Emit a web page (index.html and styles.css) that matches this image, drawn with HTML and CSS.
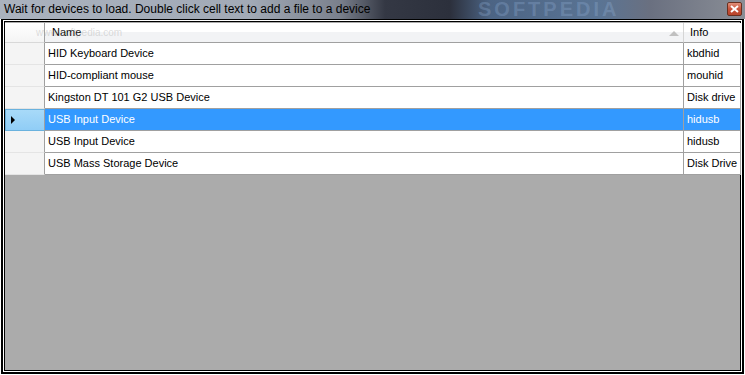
FILE: index.html
```html
<!DOCTYPE html>
<html>
<head>
<meta charset="utf-8">
<link rel="stylesheet" href="styles.css">
</head>
<body>
<div class="titlebar">
  <span class="title">Wait for devices to load. Double click cell text to add a file to a device</span>
  <span class="wm">SOFTPEDIA</span>
  <span class="close">
    <svg width="9" height="8" viewBox="0 0 9 8"><path d="M1 1 L8 7 M8 1 L1 7" stroke="#fff" stroke-width="2"/></svg>
  </span>
</div>
<div class="frame">
  <div class="inner">
    <div class="grid">
      <div class="row head">
        <div class="rh"></div>
        <div class="c name">Name<span class="sort"></span></div>
        <div class="c info">Info</div>
        <span class="wmh">www.softpedia.com</span>
      </div>
      <div class="row"><div class="rh"></div><div class="c name">HID Keyboard Device</div><div class="c info">kbdhid</div></div>
      <div class="row"><div class="rh"></div><div class="c name">HID-compliant mouse</div><div class="c info">mouhid</div></div>
      <div class="row"><div class="rh"></div><div class="c name">Kingston DT 101 G2 USB Device</div><div class="c info">Disk drive</div></div>
      <div class="row sel"><div class="rh"><span class="arrow"></span></div><div class="c name">USB Input Device</div><div class="c info">hidusb</div></div>
      <div class="row"><div class="rh"></div><div class="c name">USB Input Device</div><div class="c info">hidusb</div></div>
      <div class="row"><div class="rh"></div><div class="c name">USB Mass Storage Device</div><div class="c info">Disk Drive</div></div>
    </div>
  </div>
</div>
</body>
</html>
```
FILE: styles.css
```css
html, body {
  margin: 0;
  padding: 0;
  background: #ffffff;
  width: 745px;
  height: 375px;
  overflow: hidden;
  font-family: "Liberation Sans", Arial, sans-serif;
}
.titlebar {
  position: relative;
  height: 19px;
  background: linear-gradient(to right, #aab2be 0px, #a2aab6 250px, #7a808c 340px, #343844 385px, #2c303c 450px, #4c6484 490px, #5a7494 600px, #6a7080 650px, #8a8e96 745px);
  overflow: hidden;
}
.title {
  position: relative;
  z-index: 2;
  display: block;
  padding-left: 4px;
  line-height: 18px;
  font-family: "Liberation Sans", Arial, sans-serif;
  font-size: 12px;
  color: #000;
  white-space: nowrap;
}
.wm {
  position: absolute;
  left: 478px;
  top: 0;
  font-size: 20px;
  line-height: 19px;
  font-weight: bold;
  letter-spacing: 3px;
  color: rgba(150,180,220,0.3);
  z-index: 1;
}
.close {
  position: absolute;
  right: 3px;
  top: 2px;
  width: 15px;
  height: 14px;
  box-sizing: border-box;
  border: 1px solid #6a3020;
  border-radius: 2px;
  background: linear-gradient(#e0907a, #c8523a 50%, #b8442a);
  display: flex;
  align-items: center;
  justify-content: center;
  z-index: 3;
}
.frame {
  margin-left: 1px;
  width: 743px;
  height: 355px;
  box-sizing: border-box;
  border: 2px solid #000;
  border-top-width: 1px;
  padding: 1px;
  background: #fff;
}
.inner {
  height: 100%;
  box-sizing: border-box;
  border: 1px solid #000;
  background: #ababab;
  padding-top: 1px;
}
.grid {
  width: 736px;
  background: #ababab;
}
.row {
  display: grid;
  grid-template-columns: 40px 639px 57px;
  height: 22px;
  font-size: 11px;
}
.row .rh {
  background: #f4f4f4;
  border-right: 1px solid #a0a0a0;
  border-bottom: 1px solid #e4e4e4;
  box-sizing: border-box;
  position: relative;
}
.row .c {
  background: #fff;
  border-right: 1px solid #a0a0a0;
  border-bottom: 1px solid #a0a0a0;
  box-sizing: border-box;
  padding-left: 3px;
  line-height: 21px;
  color: #000;
  white-space: nowrap;
  overflow: hidden;
}
.row.head {
  height: 20px;
  position: relative;
}
.row.head .rh {
  background: linear-gradient(#ffffff, #f4f4f4);
  border-bottom: 1px solid #d8d8d8;
}
.row.head .c {
  background: linear-gradient(#ffffff 0, #ffffff 45%, #f2f3f5 50%, #f2f3f5 100%);
  border-right: 1px solid #d5d5d5;
  border-bottom: 1px solid #a0a0a0;
  line-height: 19px;
  padding-left: 7px;
  position: relative;
}
.row.head .info {
  border-right: none;
  padding-left: 6px;
}
.wmh {
  position: absolute;
  left: 31px;
  top: 0;
  line-height: 19px;
  color: rgba(170,170,170,0.4);
  font-size: 10px;
  pointer-events: none;
}
.sort {
  position: absolute;
  right: 4px;
  top: 8px;
  width: 0;
  height: 0;
  border-left: 5px solid transparent;
  border-right: 5px solid transparent;
  border-bottom: 5px solid #c0c0c0;
}
.row.sel .rh {
  background: linear-gradient(#a8daf8, #90cdf6);
  border: 1px solid #6ab2de;
  border-right: 1px solid #a0a0a0;
}
.row.sel .c {
  background: #3399ff;
  color: #fff;
}
.arrow {
  position: absolute;
  left: 5px;
  top: 6px;
  width: 0;
  height: 0;
  border-top: 4px solid transparent;
  border-bottom: 4px solid transparent;
  border-left: 4px solid #000;
}
```
